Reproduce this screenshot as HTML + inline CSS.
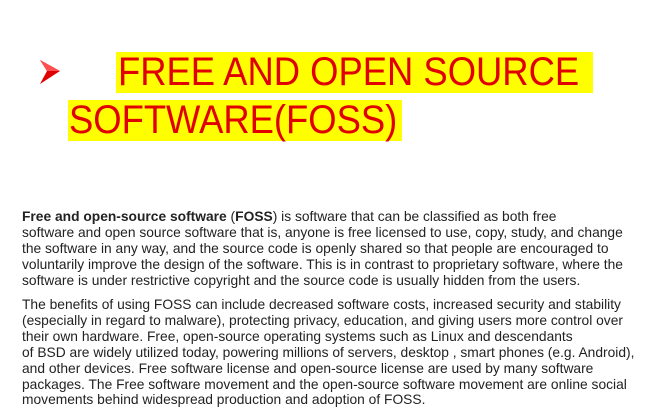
<!DOCTYPE html>
<html><head><meta charset="utf-8"><style>
body{margin:0;width:652px;height:405px;background:#fff;overflow:hidden;position:relative;font-family:"Liberation Sans",sans-serif}
.h{position:absolute;background:#ffff00}
.t{position:absolute;color:#e00000;font-size:40px;line-height:41px;white-space:nowrap;transform-origin:0 0;transform:scaleX(0.91)}
.p{position:absolute;left:22px;font-size:13.8px;line-height:15.9px;color:#222;white-space:pre}
</style></head><body>
<svg style="position:absolute;left:38px;top:58px" width="24" height="28" viewBox="0 0 24 28">
<polygon points="2,2 22,13 2,26 9,13" fill="#e00000"/>
<polygon points="2,2 22,13 9,13" fill="#ff5050"/>
</svg>
<div class="h" style="left:116px;top:52px;width:477px;height:41px"></div>
<div class="h" style="left:68px;top:100px;width:334px;height:41px"></div>
<div class="t" style="left:118px;top:52px">FREE AND OPEN SOURCE</div>
<div class="t" style="left:69px;top:100px">SOFTWARE(FOSS)</div>
<div class="p" style="top:209px"><b>Free and open-source software</b> (<b>FOSS</b>) is software that can be classified as both free
software and open source software that is, anyone is free licensed to use, copy, study, and change
the software in any way, and the source code is openly shared so that people are encouraged to
voluntarily improve the design of the software. This is in contrast to proprietary software, where the
software is under restrictive copyright and the source code is usually hidden from the users.</div>
<div class="p" style="top:297px">The benefits of using FOSS can include decreased software costs, increased security and stability
(especially in regard to malware), protecting privacy, education, and giving users more control over
their own hardware. Free, open-source operating systems such as Linux and descendants
of BSD are widely utilized today, powering millions of servers, desktop , smart phones (e.g. Android),
and other devices. Free software license and open-source license are used by many software
packages. The Free software movement and the open-source software movement are online social
movements behind widespread production and adoption of FOSS.</div>
</body></html>
